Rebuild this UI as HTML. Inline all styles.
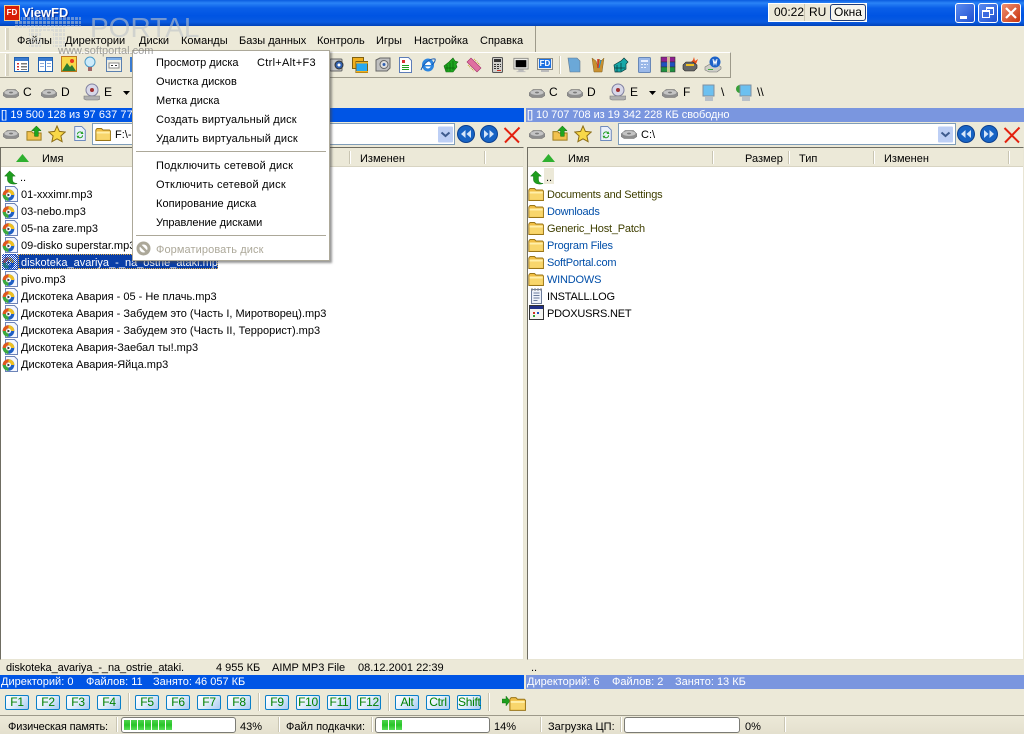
<!DOCTYPE html>
<html><head><meta charset="utf-8"><style>
html,body{margin:0;padding:0;width:1024px;height:734px;overflow:hidden;background:#ECE9D8}
body{position:relative;font:11px "Liberation Sans","Noto Sans CJK SC",sans-serif;color:#000}
.a,.t,svg.i{position:absolute}
.t{white-space:nowrap;line-height:13px;height:13px;margin-top:1px}
.l{margin-top:2px}
.r{letter-spacing:-.2px}
.d{font-size:12px}
.b{position:absolute;top:695px;width:22px;height:13px;border:1px solid #0A7FC8;border-radius:2px;background:linear-gradient(135deg,#fff 0,#E8F2FC 40%,#A9CBF3 100%);color:#008000;text-align:center;line-height:13px;font-size:12px;letter-spacing:-.3px}
.s{position:absolute;width:1px;background:#C9C5B2;border-right:1px solid #fff}
.p{position:absolute;top:717px;height:14px;background:#fff;border:1px solid #7b7b75;border-radius:3px}
.g{position:absolute;top:720px;width:6px;height:10px;background:linear-gradient(#4ED44E,#28C428 50%,#5ADF5A)}
</style></head><body>
<svg width="0" height="0" style="position:absolute"><defs>
<symbol id="drive" viewBox="0 0 16 16"><path d="M0 8 4 4.500h8.500L16 8v2.500L13 12.500H3L0 10.500z" fill="#8E8E8E" stroke="#6E6E6E" stroke-width=".5"/><ellipse cx="8" cy="7.500" rx="6.500" ry="2.500" fill="#C4C4C4"/><ellipse cx="8" cy="7.500" rx="2" ry=".9" fill="#7A7A7A"/></symbol>
<symbol id="mp3" viewBox="0 0 16 16"><path d="M3.500.5h9l3 3v12h-12z" fill="#F4F7FF" stroke="#6C83B8"/><circle cx="6.500" cy="9" r="5.800" fill="#1F5FC4"/><path d="M6.500 3.200A5.800 5.800 0 0 1 12.300 9H9a2.500 2.500 0 0 0-2.500-2.500z" fill="#F0C020"/><path d="M.7 9A5.800 5.800 0 0 1 6.500 3.200v3.300A2.500 2.500 0 0 0 4 9z" fill="#E0581C"/><path d="M6.500 14.800A5.800 5.800 0 0 1 .7 9H4a2.500 2.500 0 0 0 2.500 2.500z" fill="#3CAA3C"/><circle cx="6.500" cy="9" r="2.500" fill="#fff"/><path d="m5.500 7.500 2.500 1.500-2.500 1.500z" fill="#222"/></symbol>
<symbol id="folder" viewBox="0 0 16 16"><path d="M.8 4 2 2.500h4.500L8 4h6.500l1 1v9.500H.8z" fill="#F0BE44" stroke="#9A7618" stroke-width=".9"/><path d="M1.500 5.500h13.300v2H1.500z" fill="#FFEFA8"/><path d="M1.500 7.500h13.300v6.300H1.500z" fill="#F8D66C"/></symbol>
<symbol id="up" viewBox="0 0 16 16"><path d="M6 1 .7 6.500h3V10c0 3.500 3 5 7 5 1 0 2.300-.2 3.300-.6-3-.4-5-1.200-5-4.400V6.500h3z" fill="#1E9E1E" stroke="#0B660B" stroke-width=".5"/></symbol>
<symbol id="upf" viewBox="0 0 18 18"><path d="M1 7h5l1.500 1.500H16V16H1z" fill="#F2C24F" stroke="#9C7C1C"/><path d="M11 1 6 6h3v6h4V6h3z" fill="#1FA51F" stroke="#0B660B" stroke-width=".5"/></symbol>
<symbol id="star" viewBox="0 0 18 18"><path d="m9 1 2.400 5.400 5.800.6-4.300 3.900 1.200 5.800L9 13.800l-5.100 2.900 1.200-5.800L.8 7l5.800-.6z" fill="#F8D848" stroke="#8C6C14"/></symbol>
<symbol id="ref" viewBox="0 0 16 18"><path d="M2 1h8l4 4v12H2z" fill="#EAF0FB" stroke="#5D7DB8"/><path d="M4.500 10a3.500 3.500 0 0 1 6-2.400V6l1.500 3.500H8.500l1-1.100a2.300 2.300 0 0 0-3.900 1.600zM11.500 11a3.500 3.500 0 0 1-6 2.400V15L4 11.500h3.500l-1 1.100a2.300 2.300 0 0 0 3.900-1.600z" fill="#23A023"/></symbol>
<symbol id="back" viewBox="0 0 18 18"><circle cx="9" cy="9" r="8.500" fill="#1763C4" stroke="#0C3F8E"/><path d="M8.500 5 4 9l4.500 4zM14 5 9.500 9l4.500 4z" fill="#D5E6FA"/></symbol>
<symbol id="fwd" viewBox="0 0 18 18"><circle cx="9" cy="9" r="8.500" fill="#1763C4" stroke="#0C3F8E"/><path d="M9.500 5 14 9l-4.500 4zM4 5l4.500 4L4 13z" fill="#D5E6FA"/></symbol>
<symbol id="x" viewBox="0 0 18 18"><path d="M1.500 2 16 16.500M16.500 1.500 2 16.500" stroke="#E3200E" stroke-width="2" fill="none"/></symbol>
<symbol id="combo" viewBox="0 0 15 16"><rect width="15" height="16" fill="#BDCFF5" rx="1"/><path d="m3.500 6 4 3.500 4-3.500" stroke="#3F5C8E" stroke-width="2" fill="none"/></symbol>
<symbol id="mon" viewBox="0 0 18 18"><rect x="1" y="1.500" width="16" height="12" fill="#EDEDE8" stroke="#8A8A84"/><rect x="3" y="3.500" width="12" height="8" fill="#000"/><path d="M6 14h6v2h2v1H4v-1h2z" fill="#BBB"/></symbol>
</defs></svg>

<!-- Title bar -->
<div class="a" style="left:0;top:0;width:1024px;height:26px;background:linear-gradient(#0A5BDF 0,#2A83F6 3px,#0A5FE8 8px,#0054E3 16px,#0A5BE0 22px,#0042B8 26px)"></div>
<div class="a" style="left:4px;top:5px;width:14px;height:14px;background:#D81E05;border:1px solid #F0D090;color:#fff;font:bold 8px/14px 'Liberation Sans';text-align:center">FD</div>
<div class="t" style="left:22px;top:4px;color:#fff;font-weight:bold;font-size:13px;line-height:15px;height:15px;letter-spacing:-.1px;text-shadow:1px 1px #0A2E90">ViewFD</div>
<div class="a" style="left:768px;top:3px;width:99px;height:19px;background:#ECE9D8;border:1px solid #fff;box-sizing:border-box"></div>
<div class="a" style="left:804px;top:4px;width:1px;height:17px;background:#C9C5B2"></div>
<div class="t" style="left:774px;top:5px;font-size:12px">00:22</div>
<div class="t" style="left:809px;top:5px;font-size:12px">RU</div>
<div class="a" style="left:830px;top:4px;width:36px;height:17px;box-sizing:border-box;background:#F6F5EE;border:1px solid #1F3D7A;border-radius:3px;text-align:center;line-height:15px;font-size:12px">Окна</div>
<div class="a" style="left:955px;top:3px;width:20px;height:20px;box-sizing:border-box;border:1px solid #fff;border-radius:3px;background:linear-gradient(135deg,#5C8CF0,#1F50D0)"><div class="a" style="left:4px;top:12px;width:7px;height:3px;background:#fff"></div></div>
<div class="a" style="left:978px;top:3px;width:20px;height:20px;box-sizing:border-box;border:1px solid #fff;border-radius:3px;background:linear-gradient(135deg,#5C8CF0,#1F50D0)"><div class="a" style="left:7px;top:3px;width:6px;height:5px;border:1px solid #fff;border-top-width:2px"></div><div class="a" style="left:3px;top:6px;width:6px;height:5px;border:1px solid #fff;border-top-width:2px;background:#3A6AE0"></div></div>
<div class="a" style="left:1001px;top:3px;width:20px;height:20px;box-sizing:border-box;border:1px solid #fff;border-radius:3px;background:linear-gradient(135deg,#EE9070,#C8330E)"><svg class="i" style="left:3px;top:3px" width="12" height="12"><path d="m1 1 10 10M11 1 1 11" stroke="#fff" stroke-width="2.200"/></svg></div>

<!-- Menu bar -->
<div class="a" style="left:0;top:26px;width:535px;height:26px;border-right:1px solid #9D9A8A;border-bottom:1px solid #9D9A8A;box-sizing:content-box"></div>
<div class="a" style="left:5px;top:28px;width:3px;height:22px;background:#D8D4C2;border-left:1px solid #fff"></div>
<div class="t l" style="left:17px;top:33px">Файлы</div>
<div class="t l" style="left:65px;top:33px">Директории</div>
<div class="t l" style="left:139px;top:33px">Диски</div>
<div class="t l" style="left:181px;top:33px">Команды</div>
<div class="t l" style="left:239px;top:33px">Базы данных</div>
<div class="t l" style="left:317px;top:33px">Контроль</div>
<div class="t l" style="left:376px;top:33px">Игры</div>
<div class="t l" style="left:414px;top:33px">Настройка</div>
<div class="t l" style="left:480px;top:33px">Справка</div>

<!-- Toolbar -->
<div class="a" style="left:0;top:52px;width:731px;height:26px;border-right:1px solid #9D9A8A;border-bottom:1px solid #9D9A8A;border-top:1px solid #fff;box-sizing:border-box"></div>
<div class="a" style="left:5px;top:54px;width:3px;height:22px;background:#D8D4C2;border-left:1px solid #fff"></div>
<svg class="i" style="left:14px;top:57px" width="15" height="15"><rect x=".5" y=".5" width="14" height="14" fill="#fff" stroke="#2060B0"/><path d="M1 1h13v3H1z" fill="#3A7BD0"/><path d="M3 6h2v1.500H3zM3 9h2v1.500H3zM3 12h2v1H3z" fill="#D03030"/><path d="M7 6h6v1.500H7zM7 9h6v1.500H7zM7 12h6v1H7z" fill="#777"/></svg>
<svg class="i" style="left:38px;top:57px" width="15" height="15"><rect x=".5" y=".5" width="14" height="14" fill="#fff" stroke="#2060B0"/><path d="M1 1h13v3H1zM7 1h1v13H7z" fill="#3A7BD0"/><path d="M2 6h4v1H2zM2 9h4v1H2zM9 6h4v1H9zM9 9h4v1H9z" fill="#8AA8D8"/></svg>
<svg class="i" style="left:61px;top:56px" width="16" height="16"><rect x=".5" y=".5" width="15" height="15" fill="#F8D848" stroke="#C07820"/><circle cx="11" cy="5" r="2" fill="#E83820"/><path d="M1 15 6 7l3 4 2-2 4 6z" fill="#2E7D32"/></svg>
<svg class="i" style="left:84px;top:56px" width="12" height="18"><circle cx="6" cy="6" r="5" fill="#CDEBFA" stroke="#4A9AC8"/><path d="M4 11h4v4H4z" fill="#A06868"/></svg>
<svg class="i" style="left:106px;top:57px" width="16" height="15"><rect x=".5" y=".5" width="15" height="14" fill="#EFEFE6" stroke="#5A80B0"/><path d="M1 1h14v2H1z" fill="#7FB0E8"/><path d="M3 6h10v5H3z" fill="#fff" stroke="#888"/><path d="M5 8h2v1H5zM9 8h2v1H9z" fill="#333"/></svg>
<div class="a" style="left:130px;top:57px;width:2px;height:15px;background:#3A7BD0"></div>
<svg class="i" style="left:329px;top:56px" width="17" height="17"><rect x="1" y="3" width="12" height="12" rx="1" fill="#C8C8C8" stroke="#666"/><circle cx="10" cy="9" r="4" fill="#3060B0" stroke="#333"/><circle cx="10" cy="9" r="1.500" fill="#fff"/></svg>
<svg class="i" style="left:352px;top:57px" width="16" height="16"><rect x=".5" y=".5" width="11" height="11" fill="#F0B020" stroke="#806010"/><rect x="4" y="4.500" width="11.500" height="11" fill="#28A8F0" stroke="#806010"/><path d="M4 5h12v1.500H4zM4 14h12v1.500H4z" fill="#F0B020"/></svg>
<svg class="i" style="left:375px;top:57px" width="16" height="15"><path d="M1 3 5 1h10v10l-3 3H1z" fill="#C0C0C0" stroke="#666"/><circle cx="9" cy="7.500" r="4" fill="#E0E0E0" stroke="#666"/><circle cx="9" cy="7.500" r="1.500" fill="#3060B0"/></svg>
<svg class="i" style="left:399px;top:57px" width="13" height="16"><path d="M.5.500h9l3 3v12H.5z" fill="#fff" stroke="#5D7DB8"/><path d="M3 3h3v3H3z" fill="#D83030"/><path d="M3 8h7v1H3zM3 10h7v1H3zM3 12h7v1H3z" fill="#1E9E1E"/></svg>
<svg class="i" style="left:420px;top:57px" width="16" height="16"><ellipse cx="8" cy="8" rx="6" ry="6.500" fill="#2C86E0"/><ellipse cx="8" cy="8" rx="3" ry="3.500" fill="#fff"/><path d="M4 8h9v1.500H4z" fill="#2C86E0"/><path d="M1 13C3 7 10 1 15 2c1 2-2 5-3 6" stroke="#1A5CB0" fill="none"/></svg>
<svg class="i" style="left:443px;top:57px" width="16" height="16"><path d="M1 9 6 5l2-2 2-2 2 3 3 1-2 2 1 3-4 5H3z" fill="#1FA51F" stroke="#0B660B" stroke-width=".6"/><path d="M4 8v6M7 6v8M10 4v9M2 11h10" stroke="#0B660B" stroke-width=".7"/></svg>
<svg class="i" style="left:466px;top:57px" width="16" height="16"><path d="M1 5 5 1l10 10-4 4z" fill="#E070A0" stroke="#A03068" stroke-width=".6"/><path d="M2 8l6 6M8 2l6 6" stroke="#C8A020" stroke-dasharray="1 1"/></svg>
<svg class="i" style="left:492px;top:57px" width="11" height="16"><rect x=".5" y=".5" width="10" height="15" rx="1" fill="#D0D0CC" stroke="#555"/><rect x="2" y="2" width="7" height="3" fill="#333"/><path d="M2 7h2v1H2zM5 7h2v1H5zM8 7h1v1H8zM2 9h2v1H2zM5 9h2v1H5zM8 9h1v1H8zM2 11h2v1H2zM5 11h2v1H5z" fill="#333"/><path d="M5 13h4v1H5z" fill="#D03020"/></svg>
<svg class="i" style="left:513px;top:57px" width="16" height="16"><use href="#mon"/></svg>
<div class="a" style="left:537px;top:58px;width:16px;height:12px;background:#EDEDE8;border:1px solid #8A8A84;box-sizing:border-box"></div>
<div class="a" style="left:539px;top:59px;width:12px;height:9px;background:#1B6FE0;color:#fff;font:bold 8px/9px 'Liberation Sans';text-align:center">FD</div>
<div class="a" style="left:541px;top:70px;width:8px;height:2px;background:#BBB"></div>
<div class="s" style="left:559px;top:56px;height:18px"></div>
<svg class="i" style="left:567px;top:57px" width="14" height="16"><path d="M1 1h9l3 3v11H3z" fill="#6BA8D8" stroke="#607890" stroke-width=".6"/></svg>
<svg class="i" style="left:591px;top:57px" width="14" height="16"><path d="M1 1l2 14h8l2-14-3 3-2-2-1 8-2-6z" fill="#C89030" stroke="#806020" stroke-width=".5"/><path d="M7 2v9" stroke="#D03020" stroke-width="1.500"/><path d="M10 3 8 11" stroke="#2090D0"/></svg>
<svg class="i" style="left:613px;top:57px" width="16" height="16"><path d="M1 8l5-3 2-1 3-3 2 2 2 2-2 2v5l-5 3H2z" fill="#18A8A8" stroke="#083838" stroke-width=".7"/><path d="M4 8v7M8 6v8M2 11h10" stroke="#083838" stroke-width=".7"/></svg>
<svg class="i" style="left:638px;top:57px" width="13" height="16"><rect x=".5" y=".5" width="12" height="15" rx="1" fill="#9AB8E8" stroke="#6888B8"/><path d="M3 3h7v2H3zM3 7h2v1H3zM6 7h2v1H6zM9 7h1v1H9zM3 10h2v1H3zM6 10h2v1H6z" fill="#E8F0FF"/></svg>
<svg class="i" style="left:660px;top:56px" width="17" height="17"><path d="M1 1h14v5H1z" fill="#902090" stroke="#333" stroke-width=".6"/><path d="M1 6h14v5H1z" fill="#2050C0" stroke="#333" stroke-width=".6"/><path d="M1 11h14v5H1z" fill="#209040" stroke="#333" stroke-width=".6"/><path d="M7 1h3v15H7z" fill="#E8D8A0" opacity=".8"/></svg>
<svg class="i" style="left:682px;top:56px" width="17" height="17"><path d="M8 7 11 4l1-3 1 4 3-2-2 5-6 1z" fill="#E8501A"/><path d="M1 9 4 6h7l4 3v3l-3 3H3l-2-2z" fill="#666" stroke="#222" stroke-width=".6"/><path d="M4 8h8v2H4z" fill="#F0C020"/></svg>
<svg class="i" style="left:704px;top:56px" width="18" height="17"><path d="M1 11l5-3h7l4 3v2l-4 3H5l-4-2z" fill="#CFCFC8" stroke="#777" stroke-width=".6"/><circle cx="11" cy="6" r="5.500" fill="#1C62C8"/><path d="M9 3l1 5 1-3 1 3 1-5" stroke="#fff" fill="none"/><path d="M4 13h5v1H4z" fill="#3CAA3C"/></svg>

<!-- Drive rows left -->
<svg class="i" style="left:3px;top:85px" width="16" height="16"><use href="#drive"/></svg><div class="t d" style="left:23px;top:85px">C</div>
<svg class="i" style="left:41px;top:85px" width="16" height="16"><use href="#drive"/></svg><div class="t d" style="left:61px;top:85px">D</div>
<svg class="i" style="left:83px;top:83px" width="17" height="18"><circle cx="9" cy="7" r="6" fill="#D8D8E8" stroke="#8080A0"/><circle cx="9" cy="7" r="2" fill="#A03030"/><path d="M1 13h16v3l-2 1H3l-2-1z" fill="#B0B0B0" stroke="#777" stroke-width=".6"/></svg><div class="t d" style="left:104px;top:85px">E</div>
<svg class="i" style="left:123px;top:91px" width="7" height="4"><path d="M0 0h7L3.500 4z" fill="#000"/></svg>
<!-- Drive rows right -->
<svg class="i" style="left:529px;top:85px" width="16" height="16"><use href="#drive"/></svg><div class="t d" style="left:549px;top:85px">C</div>
<svg class="i" style="left:567px;top:85px" width="16" height="16"><use href="#drive"/></svg><div class="t d" style="left:587px;top:85px">D</div>
<svg class="i" style="left:609px;top:83px" width="17" height="18"><circle cx="9" cy="7" r="6" fill="#D8D8E8" stroke="#8080A0"/><circle cx="9" cy="7" r="2" fill="#A03030"/><path d="M1 13h16v3l-2 1H3l-2-1z" fill="#B0B0B0" stroke="#777" stroke-width=".6"/></svg><div class="t d" style="left:630px;top:85px">E</div>
<svg class="i" style="left:649px;top:91px" width="7" height="4"><path d="M0 0h7L3.500 4z" fill="#000"/></svg>
<svg class="i" style="left:662px;top:85px" width="16" height="16"><use href="#drive"/></svg><div class="t d" style="left:683px;top:85px">F</div>
<svg class="i" style="left:702px;top:84px" width="14" height="18"><rect x="1" y="1" width="11" height="11" fill="#6CC0F0" stroke="#8090A0"/><path d="M3 13h8v4H3z" fill="#B8C0C8"/></svg><div class="t d" style="left:721px;top:85px">\</div>
<svg class="i" style="left:735px;top:84px" width="18" height="18"><circle cx="5" cy="5" r="4" fill="#38A038"/><rect x="5" y="1" width="11" height="11" fill="#6CC0F0" stroke="#8090A0"/><path d="M7 13h8v4H7z" fill="#B8C0C8"/></svg><div class="t d" style="left:757px;top:85px">\\</div>

<!-- Panel headers -->
<div class="a" style="left:0;top:108px;width:524px;height:14px;background:#0055E5"></div>
<div class="a" style="left:526px;top:108px;width:498px;height:14px;background:#7A96DF"></div>
<div class="t" style="left:1px;top:108px;color:#fff;letter-spacing:.05px">[] 19 500 128 из 97 637 776 КБ свободно</div>
<div class="t" style="left:527px;top:108px;color:#fff;letter-spacing:-.05px">[] 10 707 708 из 19 342 228 КБ свободно</div>

<!-- Path rows -->
<svg class="i" style="left:3px;top:126px" width="16" height="16"><use href="#drive"/></svg>
<svg class="i" style="left:26px;top:125px" width="17" height="17"><use href="#upf"/></svg>
<svg class="i" style="left:48px;top:125px" width="18" height="18"><use href="#star"/></svg>
<svg class="i" style="left:73px;top:125px" width="14" height="17"><use href="#ref"/></svg>
<div class="a" style="left:92px;top:123px;width:363px;height:22px;box-sizing:border-box;background:#fff;border:1px solid #7F9DB9"></div>
<svg class="i" style="left:95px;top:126px" width="16" height="16"><use href="#folder"/></svg>
<div class="t" style="left:115px;top:128px">F:\-</div>
<svg class="i" style="left:438px;top:126px" width="15" height="17"><use href="#combo"/></svg>
<svg class="i" style="left:457px;top:125px" width="18" height="18"><use href="#back"/></svg>
<svg class="i" style="left:480px;top:125px" width="18" height="18"><use href="#fwd"/></svg>
<svg class="i" style="left:503px;top:126px" width="18" height="18"><use href="#x"/></svg>

<svg class="i" style="left:529px;top:126px" width="16" height="16"><use href="#drive"/></svg>
<svg class="i" style="left:552px;top:125px" width="17" height="17"><use href="#upf"/></svg>
<svg class="i" style="left:574px;top:125px" width="18" height="18"><use href="#star"/></svg>
<svg class="i" style="left:599px;top:125px" width="14" height="17"><use href="#ref"/></svg>
<div class="a" style="left:618px;top:123px;width:338px;height:22px;box-sizing:border-box;background:#fff;border:1px solid #7F9DB9"></div>
<svg class="i" style="left:621px;top:126px" width="16" height="16"><use href="#drive"/></svg>
<div class="t" style="left:641px;top:128px">C:\</div>
<svg class="i" style="left:938px;top:126px" width="15" height="17"><use href="#combo"/></svg>
<svg class="i" style="left:957px;top:125px" width="18" height="18"><use href="#back"/></svg>
<svg class="i" style="left:980px;top:125px" width="18" height="18"><use href="#fwd"/></svg>
<svg class="i" style="left:1003px;top:126px" width="18" height="18"><use href="#x"/></svg>

<!-- Panels -->
<div class="a" style="left:0;top:147px;width:524px;height:513px;box-sizing:border-box;background:#fff;border:1px solid #9D9A8A;border-left-color:#6f6d62;border-top-color:#6f6d62;border-right-color:#E8E5D4;border-bottom-color:#E8E5D4"></div>
<div class="a" style="left:527px;top:147px;width:497px;height:513px;box-sizing:border-box;background:#fff;border:1px solid #9D9A8A;border-left-color:#6f6d62;border-top-color:#6f6d62;border-right-color:#E8E5D4;border-bottom-color:#E8E5D4"></div>
<div class="a" style="left:1px;top:148px;width:522px;height:19px;background:#ECE9D8;border-bottom:1px solid #D8D4C2;box-sizing:border-box"></div>
<div class="a" style="left:528px;top:148px;width:495px;height:19px;background:#ECE9D8;border-bottom:1px solid #D8D4C2;box-sizing:border-box"></div>
<svg class="i" style="left:16px;top:154px" width="13" height="8"><path d="M6.500 0 13 8H0z" fill="#2FB02F"/></svg>
<div class="t l" style="left:42px;top:151px">Имя</div>
<div class="s" style="left:349px;top:151px;height:13px"></div>
<div class="t l" style="left:360px;top:151px">Изменен</div>
<div class="s" style="left:484px;top:151px;height:13px"></div>
<svg class="i" style="left:542px;top:154px" width="13" height="8"><path d="M6.500 0 13 8H0z" fill="#2FB02F"/></svg>
<div class="t l" style="left:568px;top:151px">Имя</div>
<div class="s" style="left:712px;top:151px;height:13px"></div>
<div class="t l" style="left:745px;top:151px">Размер</div>
<div class="s" style="left:788px;top:151px;height:13px"></div>
<div class="t l" style="left:799px;top:151px">Тип</div>
<div class="s" style="left:873px;top:151px;height:13px"></div>
<div class="t l" style="left:884px;top:151px">Изменен</div>
<div class="s" style="left:1008px;top:151px;height:13px"></div>

<!-- Left list -->
<svg class="i" style="left:4px;top:170px" width="15" height="15"><use href="#up"/></svg><div class="t l" style="left:20px;top:170px">..</div>
<svg class="i" style="left:2px;top:186px" width="16" height="16"><use href="#mp3"/></svg><div class="t l" style="left:21px;top:187px">01-xxximr.mp3</div>
<svg class="i" style="left:2px;top:203px" width="16" height="16"><use href="#mp3"/></svg><div class="t l" style="left:21px;top:204px">03-nebo.mp3</div>
<svg class="i" style="left:2px;top:220px" width="16" height="16"><use href="#mp3"/></svg><div class="t l" style="left:21px;top:221px">05-na zare.mp3</div>
<svg class="i" style="left:2px;top:237px" width="16" height="16"><use href="#mp3"/></svg><div class="t l" style="left:21px;top:238px">09-disko superstar.mp3</div>
<svg class="i" style="left:2px;top:254px" width="16" height="16"><use href="#mp3"/></svg>
<div class="a" style="left:2px;top:254px;width:16px;height:16px;background:repeating-conic-gradient(#0A3FC0 0 25%,transparent 0 50%) 0 0/2px 2px"></div>
<div class="a" style="left:18px;top:254px;width:200px;height:15px;background:#0A3FA8;outline:1px dotted #E8B040;outline-offset:-1px"></div>
<div class="t l" style="left:21px;top:255px;color:#fff">diskoteka_avariya_-_na_ostrie_ataki.mp3</div>
<svg class="i" style="left:2px;top:271px" width="16" height="16"><use href="#mp3"/></svg><div class="t l" style="left:21px;top:272px">pivo.mp3</div>
<svg class="i" style="left:2px;top:288px" width="16" height="16"><use href="#mp3"/></svg><div class="t l" style="left:21px;top:289px">Дискотека Авария - 05 - Не плачь.mp3</div>
<svg class="i" style="left:2px;top:305px" width="16" height="16"><use href="#mp3"/></svg><div class="t l" style="left:21px;top:306px">Дискотека Авария - Забудем это (Часть I, Миротворец).mp3</div>
<svg class="i" style="left:2px;top:322px" width="16" height="16"><use href="#mp3"/></svg><div class="t l" style="left:21px;top:323px">Дискотека Авария - Забудем это (Часть II, Террорист).mp3</div>
<svg class="i" style="left:2px;top:339px" width="16" height="16"><use href="#mp3"/></svg><div class="t l" style="left:21px;top:340px">Дискотека Авария-Заебал ты!.mp3</div>
<svg class="i" style="left:2px;top:356px" width="16" height="16"><use href="#mp3"/></svg><div class="t l" style="left:21px;top:357px">Дискотека Авария-Яйца.mp3</div>

<!-- Right list -->
<div class="a" style="left:544px;top:168px;width:10px;height:16px;background:#ECE9D8"></div>
<svg class="i" style="left:530px;top:170px" width="15" height="15"><use href="#up"/></svg><div class="t l" style="left:546px;top:170px">..</div>
<svg class="i" style="left:528px;top:186px" width="16" height="16"><use href="#folder"/></svg><div class="t l r" style="left:547px;top:187px;color:#3F3F00">Documents and Settings</div>
<svg class="i" style="left:528px;top:203px" width="16" height="16"><use href="#folder"/></svg><div class="t l r" style="left:547px;top:204px;color:#004EA8">Downloads</div>
<svg class="i" style="left:528px;top:220px" width="16" height="16"><use href="#folder"/></svg><div class="t l r" style="left:547px;top:221px;color:#3F3F00">Generic_Host_Patch</div>
<svg class="i" style="left:528px;top:237px" width="16" height="16"><use href="#folder"/></svg><div class="t l r" style="left:547px;top:238px;color:#004EA8">Program Files</div>
<svg class="i" style="left:528px;top:254px" width="16" height="16"><use href="#folder"/></svg><div class="t l r" style="left:547px;top:255px;color:#004EA8">SoftPortal.com</div>
<svg class="i" style="left:528px;top:271px" width="16" height="16"><use href="#folder"/></svg><div class="t l r" style="left:547px;top:272px;color:#004EA8">WINDOWS</div>
<svg class="i" style="left:530px;top:288px" width="13" height="16"><path d="M1.500 1.500h10v14h-10z" fill="#EEF2FA" stroke="#6C7C9C"/><path d="M3.500 5h6M3.500 7.500h6M3.500 10h6M3.500 12.500h4" stroke="#6C7C9C"/><path d="M2 0v3M5 0v3M8 0v3M11 0v3" stroke="#888"/></svg><div class="t l r" style="left:547px;top:289px">INSTALL.LOG</div>
<svg class="i" style="left:529px;top:305px" width="15" height="15"><rect x=".5" y=".5" width="14" height="14" fill="#F4F4F0" stroke="#333"/><path d="M1 1h13v3H1z" fill="#203088"/><path d="M4 7h2v2H4z" fill="#D03020"/><path d="M8 7h2v2H8z" fill="#2050C0"/><path d="M4 10h2v2H4z" fill="#30A030"/></svg><div class="t l r" style="left:547px;top:306px">PDOXUSRS.NET</div>

<!-- Info rows -->
<div class="t" style="left:6px;top:661px;letter-spacing:-.1px">diskoteka_avariya_-_na_ostrie_ataki.</div>
<div class="t" style="left:216px;top:661px">4 955 КБ</div>
<div class="t" style="left:272px;top:661px">AIMP MP3 File</div>
<div class="t" style="left:358px;top:661px">08.12.2001 22:39</div>
<div class="t" style="left:531px;top:661px">..</div>
<div class="a" style="left:0;top:675px;width:524px;height:14px;background:#0055E5"></div>
<div class="a" style="left:526px;top:675px;width:498px;height:14px;background:#7A96DF"></div>
<div class="t l" style="left:1px;top:674px;color:#fff">Директорий: 0</div>
<div class="t l" style="left:86px;top:674px;color:#fff">Файлов: 11</div>
<div class="t l" style="left:153px;top:674px;color:#fff">Занято: 46 057 КБ</div>
<div class="t l" style="left:527px;top:674px;color:#fff">Директорий: 6</div>
<div class="t l" style="left:612px;top:674px;color:#fff">Файлов: 2</div>
<div class="t l" style="left:675px;top:674px;color:#fff">Занято: 13 КБ</div>

<!-- Function keys -->
<div class="b" style="left:5px">F1</div><div class="b" style="left:36px">F2</div><div class="b" style="left:66px">F3</div><div class="b" style="left:97px">F4</div>
<div class="s" style="left:128px;top:693px;height:18px"></div>
<div class="b" style="left:135px">F5</div><div class="b" style="left:166px">F6</div><div class="b" style="left:197px">F7</div><div class="b" style="left:227px">F8</div>
<div class="s" style="left:258px;top:693px;height:18px"></div>
<div class="b" style="left:265px">F9</div><div class="b" style="left:296px">F10</div><div class="b" style="left:327px">F11</div><div class="b" style="left:357px">F12</div>
<div class="s" style="left:388px;top:693px;height:18px"></div>
<div class="b" style="left:395px">Alt</div><div class="b" style="left:426px">Ctrl</div><div class="b" style="left:457px">Shift</div>
<div class="s" style="left:488px;top:693px;height:18px"></div>
<svg class="i" style="left:502px;top:696px" width="8" height="10"><path d="M0 3h4V0l4 5-4 5V7H0z" fill="#1E9E1E" stroke="#0B660B" stroke-width=".4"/></svg>
<svg class="i" style="left:509px;top:695px" width="17" height="17"><use href="#folder"/></svg>

<!-- Status bar -->
<div class="a" style="left:0;top:715px;width:1024px;height:19px;border-top:1px solid #9D9A8A;box-sizing:border-box;background:linear-gradient(#ECE9D8,#E4E0CE)"></div>
<div class="t l" style="left:8px;top:719px;letter-spacing:-.15px">Физическая память:</div>
<div class="s" style="left:116px;top:717px;height:15px"></div>
<div class="p" style="left:121px;width:113px"></div>
<div class="g" style="left:124px"></div><div class="g" style="left:131px"></div><div class="g" style="left:138px"></div><div class="g" style="left:145px"></div><div class="g" style="left:152px"></div><div class="g" style="left:159px"></div><div class="g" style="left:166px"></div>
<div class="t l" style="left:240px;top:719px">43%</div>
<div class="s" style="left:278px;top:717px;height:15px"></div>
<div class="t l" style="left:286px;top:719px">Файл подкачки:</div>
<div class="s" style="left:371px;top:717px;height:15px"></div>
<div class="p" style="left:375px;width:113px"></div>
<div class="g" style="left:382px"></div><div class="g" style="left:389px"></div><div class="g" style="left:396px"></div>
<div class="t l" style="left:494px;top:719px">14%</div>
<div class="s" style="left:540px;top:717px;height:15px"></div>
<div class="t l" style="left:548px;top:719px">Загрузка ЦП:</div>
<div class="s" style="left:620px;top:717px;height:15px"></div>
<div class="p" style="left:624px;width:114px"></div>
<div class="t l" style="left:745px;top:719px">0%</div>
<div class="s" style="left:784px;top:717px;height:15px"></div>

<!-- Disk menu -->
<div class="a" style="left:132px;top:50px;width:198px;height:211px;box-sizing:border-box;background:#fff;border:1px solid #ACA899;box-shadow:2px 2px 2px rgba(70,70,70,.55)"></div>
<div class="t" style="left:156px;top:56px">Просмотр диска</div>
<div class="t" style="left:257px;top:56px;letter-spacing:.3px">Ctrl+Alt+F3</div>
<div class="t" style="left:156px;top:75px;letter-spacing:.05px">Очистка дисков</div>
<div class="t" style="left:156px;top:94px">Метка диска</div>
<div class="t" style="left:156px;top:113px;letter-spacing:.13px">Создать виртуальный диск</div>
<div class="t" style="left:156px;top:132px;letter-spacing:.17px">Удалить виртуальный диск</div>
<div class="a" style="left:136px;top:151px;width:190px;height:1px;background:#ACA899"></div>
<div class="t" style="left:156px;top:159px;letter-spacing:.25px">Подключить сетевой диск</div>
<div class="t" style="left:156px;top:178px;letter-spacing:.23px">Отключить сетевой диск</div>
<div class="t" style="left:156px;top:197px;letter-spacing:.06px">Копирование диска</div>
<div class="t" style="left:156px;top:216px;letter-spacing:-.05px">Управление дисками</div>
<div class="a" style="left:136px;top:235px;width:190px;height:1px;background:#ACA899"></div>
<svg class="i" style="left:136px;top:241px" width="15" height="15"><circle cx="7.500" cy="7.500" r="5.500" fill="none" stroke="#ACA899" stroke-width="3"/><path d="m4 4 7 7" stroke="#ACA899" stroke-width="2.500"/></svg>
<div class="t" style="left:156px;top:243px;color:#ACA899;letter-spacing:.1px">Форматировать диск</div>

<!-- Watermark -->
<div class="t" style="left:90px;top:9px;font-size:28px;line-height:36px;height:36px;color:rgba(190,195,200,.6)">PORTAL</div>
<svg class="i" style="left:15px;top:17px" width="68" height="30"><defs><pattern id="dp" width="4" height="4" patternUnits="userSpaceOnUse"><rect width="3" height="3" fill="rgba(200,205,210,.5)"/></pattern></defs><path d="M6 0h60v10H50v20H38V14H26v16H14V12H0V4H6z" fill="url(#dp)"/></svg>
<div class="t" style="left:58px;top:44px;color:rgba(130,130,130,.75);font-size:11px">www.softportal.com</div>
</body></html>
